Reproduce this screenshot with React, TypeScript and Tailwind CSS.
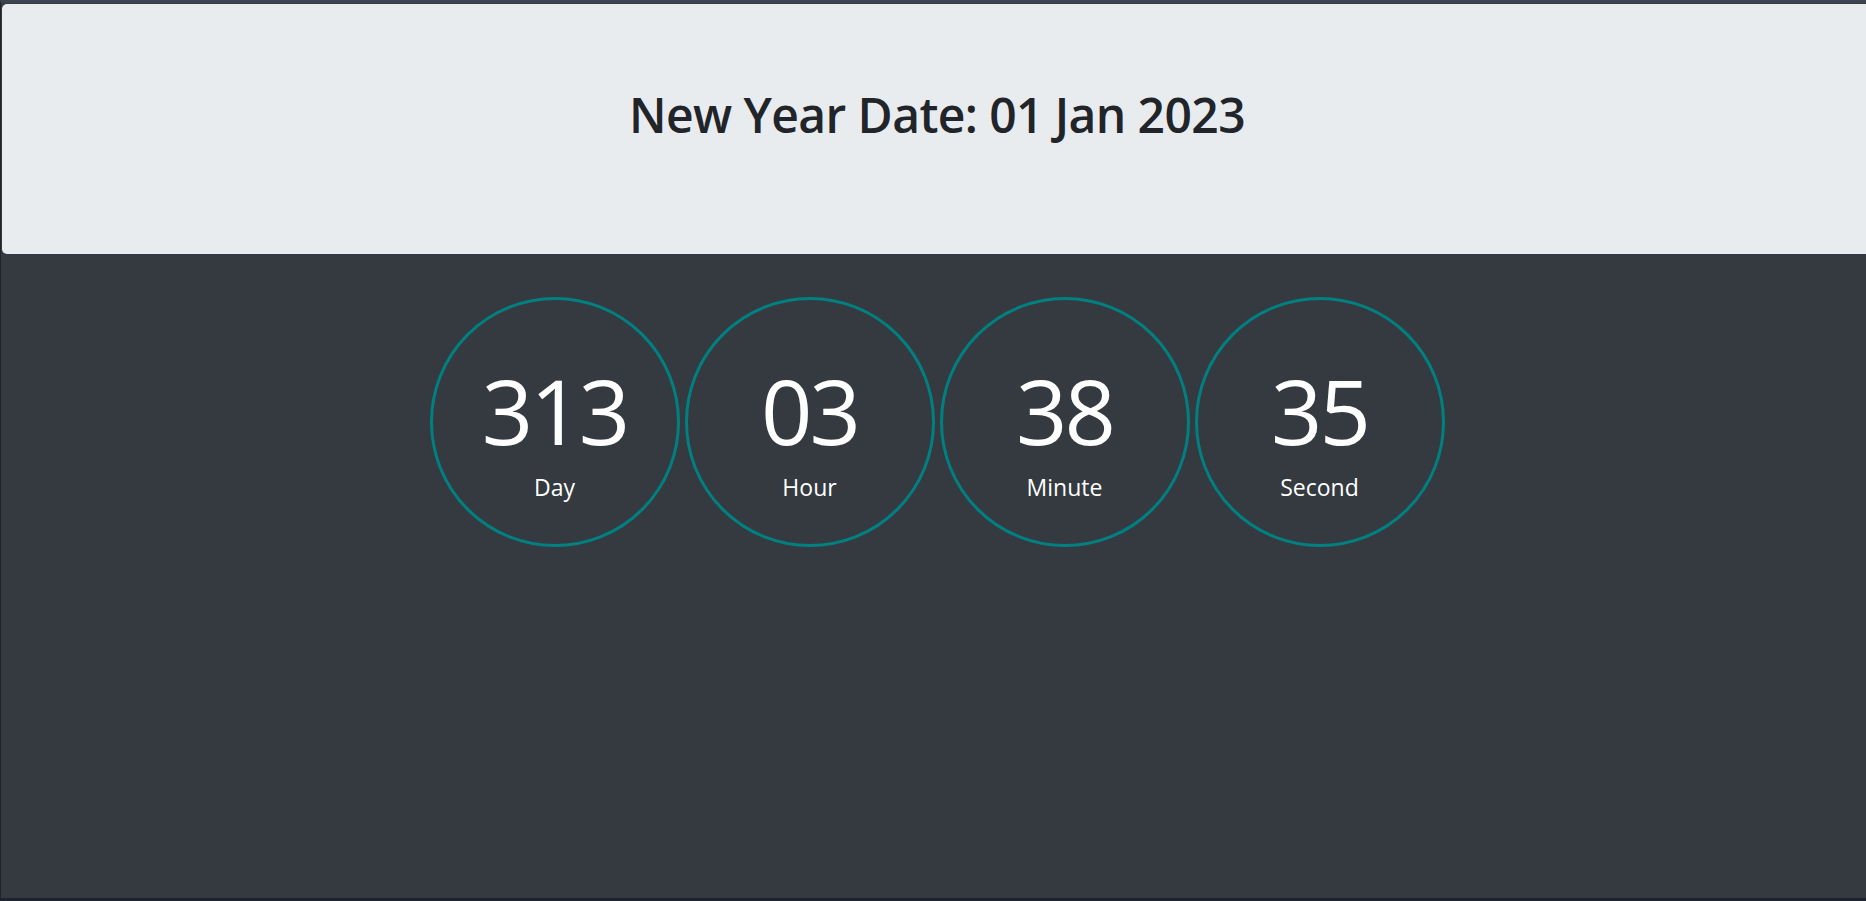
import React from 'react'

const units = [
  { value: '313', label: 'Day' },
  { value: '03', label: 'Hour' },
  { value: '38', label: 'Minute' },
  { value: '35', label: 'Second' },
]

export default function App() {
  return (
    <div className="h-[901px] w-full overflow-hidden border-t-[3px] border-b-[3px] border-l border-t-[#3b4450] border-b-[#1b2430] border-l-[#202428] bg-[#343a40] font-['Open_Sans',sans-serif]">
      <div className="ml-[1px] mt-[1px] w-[1870px]">
        {/* Jumbotron */}
        <div className="h-[250px] rounded-[5px] bg-[#e9ecef] pt-[87px] text-center">
          <h1 className="text-[48px] font-semibold leading-none tracking-[-0.6px] text-[#212529]">
            New Year Date: 01 Jan 2023
          </h1>
        </div>

        {/* Countdown */}
        <div className="mt-[43px] flex justify-center gap-[5px]">
          {units.map((u) => (
            <div
              key={u.label}
              className="flex h-[250px] w-[250px] flex-col items-center rounded-full border-[3px] border-[#008080] pt-[65px] text-white"
            >
              <span className="text-[90px] leading-none tracking-[-3px]">{u.value}</span>
              <span className="mt-[21px] text-[23px] leading-none">{u.label}</span>
            </div>
          ))}
        </div>
      </div>
    </div>
  )
}
